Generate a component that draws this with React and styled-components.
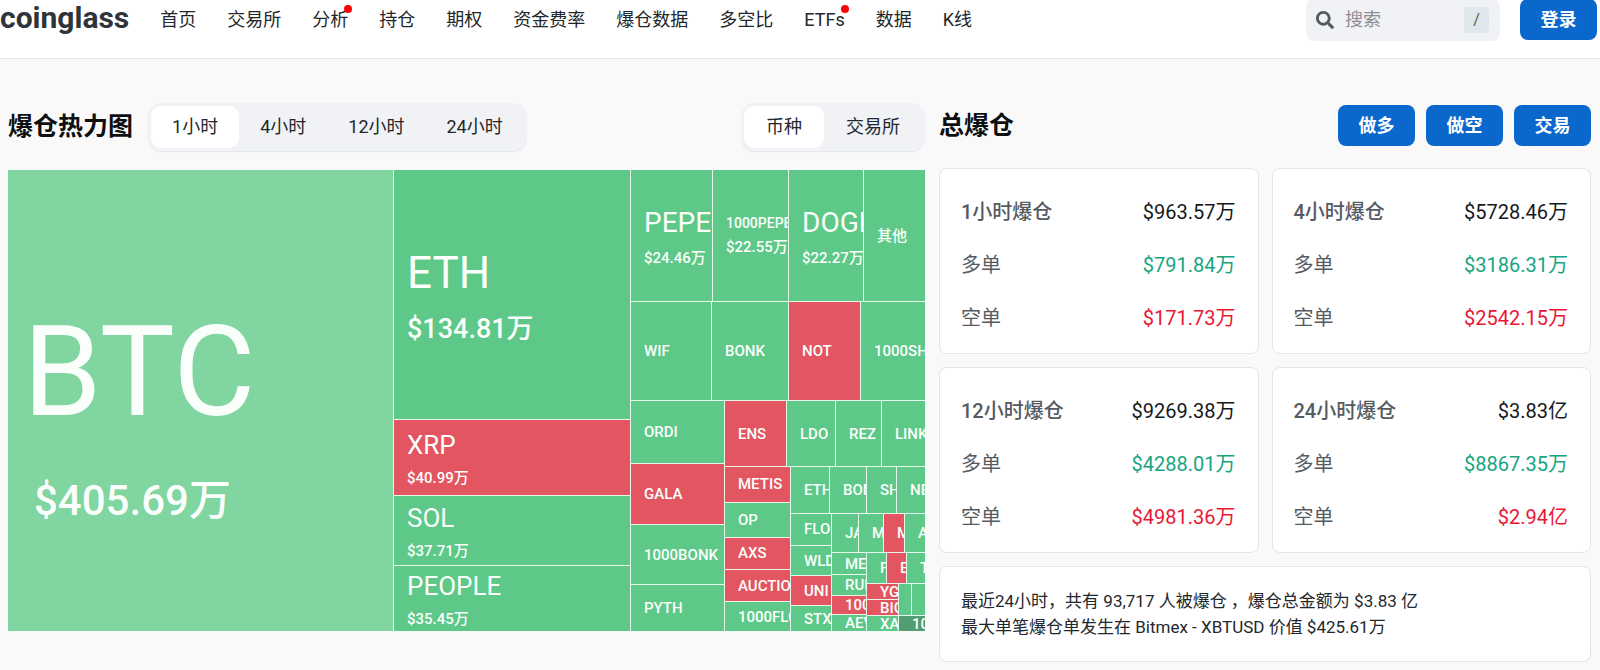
import React, { useState } from 'react';
import styled, { createGlobalStyle, css } from 'styled-components';
import { FaSearch } from 'react-icons/fa';

const color = {
  page: '#f9f9f9',
  line: '#e4e5e6',
  ink: '#23272c',
  heading: '#0d0f11',
  total: '#16191c',
  muted: '#555b62',
  soft: '#f0f2f5',
  blue: '#0a68cc',
  up: '#17a57f',
  down: '#ea1734',
};

const tileColor = {
  pale: '#80d5a1',
  green: '#5dc887',
  red: '#e35561',
  dark: '#4f9d70',
};

const GlobalStyle = createGlobalStyle`
  *, *::before, *::after { box-sizing: border-box; }
  body {
    margin: 0;
    background: ${color.page};
    color: ${color.ink};
    font-family: Roboto, 'Noto Sans CJK SC', sans-serif;
    font-size: 18px;
    line-height: 24px;
  }
  button, input, kbd { font: inherit; color: inherit; }
  h1, h2, h3, p, ul, dl, dd { margin: 0; padding: 0; font-weight: inherit; }
`;

/* ---------- top bar ---------- */

const TopBar = styled.header`
  display: flex;
  align-items: flex-start;
  margin-top: -1px;
  padding: 0 3px 17px 0;
  background: #fff;
  border-bottom: 1px solid ${color.line};
`;

const Logo = styled.a`
  color: #2f343a;
  font-size: 30px;
  font-weight: 700;
  line-height: 37px;
  text-decoration: none;
`;

const Nav = styled.nav`
  flex: 1;
  margin-left: 31px;
`;

const NavList = styled.ul`
  display: flex;
  gap: 31px;
  list-style: none;
  line-height: 41px;
  white-space: nowrap;
`;

const NavLink = styled.a`
  position: relative;
  color: ${color.ink};
  text-decoration: none;

  ${(p) =>
    p.$dot &&
    css`
      &::after {
        content: '';
        position: absolute;
        top: -4px;
        right: -4px;
        width: 8px;
        height: 8px;
        border-radius: 50%;
        background: #fb0207;
      }
    `}
`;

const SearchBox = styled.label`
  display: flex;
  align-items: center;
  width: 194px;
  height: 42px;
  margin-right: 20px;
  padding: 0 11px 0 10px;
  border-radius: 8px;
  background: ${color.soft};
  color: #565b60;
`;

const SearchInput = styled.input`
  flex: 1;
  min-width: 0;
  margin-left: 11px;
  padding: 0;
  border: 0;
  outline: 0;
  background: none;
  &::placeholder { color: #8b8e92; opacity: 1; }
`;

const Key = styled.kbd`
  width: 25px;
  border-radius: 3px;
  background: #e0e8eb;
  font-size: 16px;
  line-height: 26px;
  text-align: center;
`;

const PrimaryButton = styled.button`
  min-width: 77px;
  height: 41px;
  padding: 0 20px;
  border: 0;
  border-radius: 8px;
  background: ${color.blue};
  color: #fff;
  font-weight: 700;
  cursor: pointer;
`;

/* ---------- page body ---------- */

const Main = styled.main`
  display: grid;
  grid-template-columns: minmax(0, 917fr) minmax(0, 652fr);
  align-items: start;
  gap: 14px;
  padding: 44px 9px 8px 8px;
`;

const PanelHead = styled.div`
  display: flex;
  align-items: center;
  justify-content: space-between;
  min-height: ${(p) => p.$height}px;
  margin-bottom: ${(p) => p.$below}px;
`;

const HeadGroup = styled.div`
  display: flex;
  align-items: center;
  gap: ${(p) => p.$gap}px;
`;

const Title = styled.h2`
  color: ${color.heading};
  font-size: 25px;
  font-weight: 700;
  line-height: 36px;
`;

const Segments = styled.div`
  display: flex;
  padding: 3px;
  border-radius: 14px;
  background: ${color.soft};
  box-shadow: 0 1px 1px #e3e6ea;
`;

const Segment = styled.button`
  height: 42px;
  padding: 0 ${(p) => p.$pad}px;
  border: 0;
  border-radius: 10px;
  background: ${(p) => (p.$active ? '#fff' : 'transparent')};
  cursor: pointer;
`;

/* ---------- heat map ---------- */

const HeatMap = styled.div`
  display: flex;
  height: 461px;
  background: #e6f8ec;
`;

const Split = styled.div`
  display: flex;
  flex: ${(p) => p.$grow} 1 0;
  flex-direction: ${(p) => p.$dir};
  gap: 1px;
  min-width: 0;
  min-height: 0;
`;

const Tile = styled.div`
  display: flex;
  flex: ${(p) => p.$grow} 1 0;
  flex-direction: column;
  justify-content: center;
  min-width: 0;
  min-height: 0;
  overflow: hidden;
  background: ${(p) => tileColor[p.$tone]};
  color: #fbfffc;
  line-height: 1.6;
  white-space: nowrap;
`;

const TileName = styled.span`
  padding-left: ${(p) => (p.$large ? 15 : 13)}px;
  font-size: ${(p) => p.$size}px;
  font-weight: ${(p) => (p.$size > 20 ? 400 : 500)};
`;

const TileValue = styled.span`
  padding-left: ${(p) => (p.$large ? 26 : 13)}px;
  font-size: ${(p) => p.$size}px;
  font-weight: 500;
  line-height: ${(p) => (p.$large ? 1.3 : 1.6)};
`;

const row = (grow, ...items) => ({ grow, dir: 'row', items });
const col = (grow, ...items) => ({ grow, dir: 'column', items });
const tile = (grow, name, tone = 'green', size = 15, value, valueSize = 15) => ({
  grow, name, tone, size, value, valueSize,
});

const market = row(
  1,
  tile(385, 'BTC', 'pale', 126, '$405.69万', 42),
  col(
    236,
    tile(249, 'ETH', 'green', 44, '$134.81万', 27),
    tile(75, 'XRP', 'red', 26, '$40.99万'),
    tile(69, 'SOL', 'green', 26, '$37.71万'),
    tile(65, 'PEOPLE', 'green', 26, '$35.45万')
  ),
  col(
    294,
    row(
      131,
      tile(81, 'PEPE', 'green', 28, '$24.46万'),
      tile(75, '1000PEPE', 'green', 14, '$22.55万'),
      tile(74, 'DOGE', 'green', 28, '$22.27万'),
      tile(61, '其他')
    ),
    row(98, tile(80, 'WIF'), tile(76, 'BONK'), tile(71, 'NOT', 'red'), tile(64, '1000SHIB')),
    row(
      230,
      col(93, tile(62, 'ORDI'), tile(60, 'GALA', 'red'), tile(59, '1000BONK'), tile(46, 'PYTH')),
      col(
        200,
        row(65, tile(61, 'ENS', 'red'), tile(48, 'LDO'), tile(45, 'REZ'), tile(43, 'LINK')),
        row(
          164,
          col(
            65,
            tile(35, 'METIS', 'red'),
            tile(34, 'OP'),
            tile(32, 'AXS', 'red'),
            tile(31, 'AUCTION', 'red'),
            tile(29, '1000FLOKI')
          ),
          col(
            134,
            row(46, tile(38, 'ETHFI'), tile(36, 'BOME'), tile(29, 'SHIB'), tile(28, 'NEAR')),
            row(
              118,
              col(40, tile(32, 'FLOKI'), tile(29, 'WLD'), tile(30, 'UNI', 'red'), tile(25, 'STX')),
              col(
                93,
                row(39, tile(26, 'JASMY'), tile(24, 'MKR'), tile(20, 'MEW', 'red'), tile(20, 'ARB')),
                row(
                  78,
                  col(34, tile(21, 'MEME'), tile(20, 'RUNE'), tile(19, '1000RATS', 'red'), tile(16, 'AEVO')),
                  col(
                    58,
                    row(30, tile(19, 'FTM'), tile(19, 'ENA', 'red'), tile(18, 'TIA')),
                    row(
                      47,
                      col(31, tile(15, 'YGG', 'red'), tile(16, 'BIGTIME', 'red'), tile(15, 'XAI')),
                      col(26, row(32, tile(12, ''), tile(13, '')), tile(15, '1000LUNC', 'dark'))
                    )
                  )
                )
              )
            )
          )
        )
      )
    )
  )
);

function Cell({ node }) {
  if (node.items) {
    return (
      <Split $grow={node.grow} $dir={node.dir}>
        {node.items.map((child, i) => (
          <Cell key={i} node={child} />
        ))}
      </Split>
    );
  }
  const large = node.size > 100;
  return (
    <Tile $grow={node.grow} $tone={node.tone}>
      {node.name && (
        <TileName $size={node.size} $large={large}>
          {node.name}
        </TileName>
      )}
      {node.value && (
        <TileValue $size={node.valueSize} $large={large}>
          {node.value}
        </TileValue>
      )}
    </Tile>
  );
}

/* ---------- totals ---------- */

const Totals = styled.section`
  padding-top: 2px;
`;

const CardGrid = styled.div`
  display: grid;
  grid-template-columns: 1fr 1fr;
  gap: 13px;
`;

const Card = styled.div`
  border: 1px solid ${color.line};
  border-radius: 8px;
  background: #fff;
`;

const StatCard = styled(Card).attrs({ as: 'dl' })`
  display: flex;
  flex-direction: column;
  gap: 29px;
  padding: 31px 22px 23px 21px;
  font-size: 20px;
`;

const StatRow = styled.div`
  display: flex;
  justify-content: space-between;
`;

const StatLabel = styled.dt`
  color: ${color.muted};
  font-weight: ${(p) => (p.$strong ? 500 : 400)};
`;

const StatValue = styled.dd`
  color: ${(p) => color[p.$tone]};
`;

const Summary = styled(Card)`
  grid-column: 1 / -1;
  padding: 21px;
  font-size: 17px;
  line-height: 26px;
`;

const navItems = [
  ['首页'], ['交易所'], ['分析', true], ['持仓'], ['期权'], ['资金费率'],
  ['爆仓数据'], ['多空比'], ['ETFs', true], ['数据'], ['K线'],
];

const stats = [
  ['1小时爆仓', '$963.57万', '$791.84万', '$171.73万'],
  ['4小时爆仓', '$5728.46万', '$3186.31万', '$2542.15万'],
  ['12小时爆仓', '$9269.38万', '$4288.01万', '$4981.36万'],
  ['24小时爆仓', '$3.83亿', '$8867.35万', '$2.94亿'],
];

function Switcher({ label, options, pad }) {
  const [active, setActive] = useState(options[0]);
  return (
    <Segments role="group" aria-label={label}>
      {options.map((o) => (
        <Segment
          key={o}
          type="button"
          $pad={pad}
          $active={o === active}
          aria-pressed={o === active}
          onClick={() => setActive(o)}
        >
          {o}
        </Segment>
      ))}
    </Segments>
  );
}

export default function App() {
  return (
    <>
      <GlobalStyle />
      <TopBar>
        <Logo href="#">coinglass</Logo>
        <Nav>
          <NavList>
            {navItems.map(([name, dot]) => (
              <li key={name}>
                <NavLink href="#" $dot={dot}>{name}</NavLink>
              </li>
            ))}
          </NavList>
        </Nav>
        <SearchBox>
          <FaSearch size={18} aria-hidden="true" />
          <SearchInput type="text" placeholder="搜索" aria-label="搜索" />
          <Key>/</Key>
        </SearchBox>
        <PrimaryButton type="button">登录</PrimaryButton>
      </TopBar>
      <Main>
        <section>
          <PanelHead $height={48} $below={19}>
            <HeadGroup $gap={15}>
              <Title>爆仓热力图</Title>
              <Switcher label="时间" pad={21} options={['1小时', '4小时', '12小时', '24小时']} />
            </HeadGroup>
            <Switcher label="分类" pad={22} options={['币种', '交易所']} />
          </PanelHead>
          <HeatMap>
            <Cell node={market} />
          </HeatMap>
        </section>
        <Totals>
          <PanelHead $height={41} $below={22}>
            <Title>总爆仓</Title>
            <HeadGroup $gap={11}>
              <PrimaryButton type="button">做多</PrimaryButton>
              <PrimaryButton type="button">做空</PrimaryButton>
              <PrimaryButton type="button">交易</PrimaryButton>
            </HeadGroup>
          </PanelHead>
          <CardGrid>
            {stats.map(([name, total, long, short]) => (
              <StatCard key={name}>
                <StatRow>
                  <StatLabel $strong>{name}</StatLabel>
                  <StatValue $tone="total">{total}</StatValue>
                </StatRow>
                <StatRow>
                  <StatLabel>多单</StatLabel>
                  <StatValue $tone="up">{long}</StatValue>
                </StatRow>
                <StatRow>
                  <StatLabel>空单</StatLabel>
                  <StatValue $tone="down">{short}</StatValue>
                </StatRow>
              </StatCard>
            ))}
            <Summary>
              <p>最近24小时，共有 93,717 人被爆仓 ，爆仓总金额为 $3.83 亿</p>
              <p>最大单笔爆仓单发生在 Bitmex - XBTUSD 价值 $425.61万</p>
            </Summary>
          </CardGrid>
        </Totals>
      </Main>
    </>
  );
}
